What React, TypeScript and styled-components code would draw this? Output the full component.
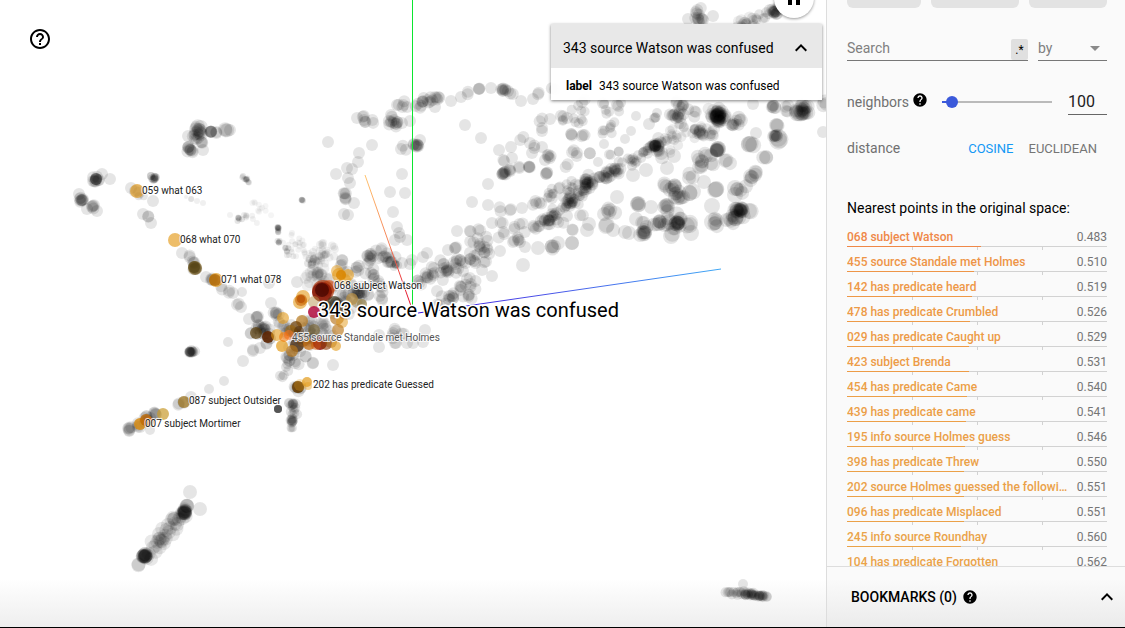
import React from "react";
import styled, { createGlobalStyle } from "styled-components";

const GlobalStyle = createGlobalStyle`
  *, *::before, *::after { box-sizing: border-box; }
  body {
    margin: 0;
    background: #fff;
    color: #000;
    font-family: Roboto, "Liberation Sans", sans-serif;
    font-size: 14px;
  }
  button, input, select { font: inherit; color: inherit; margin: 0; }
`;

/* ---------- point cloud data ---------- */

// [x, y, number of overlapping points, spread, radius, opacity]
type Clump = [number, number, number?, number?, number?, number?];
// [x1, y1, x2, y2, number of points, spread, radius, opacity]
type Streak = [number, number, number, number, number, number, number, number?];
// [x, y, radius, colour, opacity]
type Marked = [number, number, number, string, number];

const clumps: Clump[] = [
  [328, 142], [372, 145], [359, 153], [358, 162], [347, 168], [352, 169], [336, 174], [348, 178], [350, 183],
  [345, 193, 3, 1], [345, 198, 3, 1], [354, 203], [344, 214], [348, 215], [402, 174], [390, 192], [405, 193],
  [393, 212], [397, 227], [399, 233], [400, 237], [395, 240], [407, 240], [357, 118], [364, 120, 5, 3],
  [374, 122, 2, 2], [391, 121, 6, 3], [397, 123, 6, 3], [402, 123], [391, 115], [410, 121], [402, 104, 4, 3],
  [397, 105], [407, 107], [418, 107, 2, 2], [422, 102, 6, 3], [429, 102, 4, 3], [435, 97, 4, 3], [439, 97, 2, 1],
  [435, 107], [451, 101], [461, 97], [468, 94, 2, 2], [479, 89, 3, 1], [491, 88], [503, 90, 7, 2], [508, 91],
  [513, 94, 2, 2], [521, 101], [533, 99], [538, 93, 2, 2], [465, 125], [481, 138], [416, 145, 9, 2], [420, 140],
  [405, 147, 2, 2], [401, 149], [499, 150], [511, 147], [522, 138, 2, 2], [530, 143], [533, 148, 2, 2],
  [542, 147], [532, 153], [550, 156, 3, 2], [545, 160], [504, 173, 9, 2], [510, 169, 3, 2], [517, 167, 2, 2],
  [529, 167, 4, 1], [503, 161, 2, 2], [512, 158], [547, 173, 2, 1], [488, 184], [472, 202], [488, 205],
  [540, 120, 2, 2], [550, 119], [562, 118, 2, 2], [542, 128], [567, 118], [542, 131], [500, 210, 2, 2],
  [510, 209, 2, 2], [522, 208], [535, 203, 3, 3], [541, 204, 2, 2], [550, 196, 2, 2], [560, 188, 2, 3],
  [549, 220, 9, 3], [554, 216, 4, 3], [537, 227, 2, 3], [502, 223, 2, 2], [514, 227, 2, 2], [492, 223],
  [503, 233, 2, 2], [518, 240, 4, 3], [513, 242], [525, 247], [500, 251], [552, 247, 4, 3, 7], [538, 248, 1, 0, 7],
  [558, 243, 1, 0, 7], [572, 243, 1, 0, 7], [523, 265, 1, 0, 7], [492, 276], [457, 231], [470, 231, 2, 3],
  [478, 229, 2, 2], [480, 247, 12, 8], [455, 248, 3, 1], [448, 250], [485, 252, 4, 4], [482, 263, 2, 3],
  [482, 270], [427, 278, 4, 4], [435, 272, 3, 4], [448, 270, 4, 3], [457, 260, 4, 4], [440, 262, 2, 3],
  [463, 271], [468, 282, 4, 3], [461, 287, 4, 4], [453, 298, 4, 3], [437, 291], [468, 297, 2, 3],
  [420, 283, 3, 3], [412, 260], [410, 264], [423, 257], [427, 253], [402, 263], [438, 305, 2, 3],
  [368, 256, 9, 4], [378, 250, 2, 3], [384, 256, 5, 5], [357, 267, 4, 4], [342, 260], [396, 265, 6, 2, 4],
  [387, 258, 2, 3], [373, 275, 5, 5], [357, 292, 22, 8], [318, 275, 28, 10, 6, 0.06], [324, 255, 30, 9, 4, 0.06],
  [312, 264, 8, 4, 4], [278, 228, 8, 1, 3], [278, 232, 3, 1, 3], [279, 242, 5, 2, 3], [285, 248, 5, 3, 3],
  [290, 254, 4, 3, 3, 0.07], [292, 233, 1, 0, 3, 0.05], [300, 243, 3, 3, 3, 0.05], [239, 219, 6, 2, 3],
  [247, 216, 4, 3, 3, 0.07], [252, 220, 3, 4, 3, 0.05], [230, 215, 1, 0, 3, 0.05],
  [395, 330, 3, 3], [379, 335], [379, 347], [403, 332, 2, 2],
  [395, 343, 2, 2], [413, 343], [423, 342], [425, 330], [393, 337, 2, 2], [407, 343], [257, 317, 4, 1],
  [276, 313, 6, 2], [263, 329, 16, 5], [270, 338, 6, 5], [250, 333, 2, 2], [253, 351, 2, 1], [260, 348],
  [243, 361], [313, 363, 2, 1], [333, 365], [290, 357, 7, 3], [286, 367, 3, 3, 5], [283, 375, 3, 4, 5],
  [297, 362, 3, 3], [293, 404, 12, 3, 5, 0.09], [293, 413, 5, 3, 5], [292, 421, 12, 3, 5, 0.08], [291, 427, 3, 2, 4],
  [278, 409, 10, 0, 4], [298, 387, 10, 3], [305, 340, 26, 12], [320, 328, 30, 12, 6, 0.08], [338, 304, 26, 10],
  [326, 290, 12, 5],
  [182, 253], [189, 258, 2, 2], [192, 263, 3, 2], [195, 268, 8, 2], [206, 277], [212, 280, 4, 2], [223, 287, 2, 2],
  [229, 293, 2, 2], [233, 293], [242, 292, 1, 0, 5], [237, 304, 2, 2], [241, 307], [228, 342, 1, 0, 5],
  [190, 352, 9, 1, 5], [193, 352, 7, 2, 5], [249, 319], [271, 303], [224, 381, 1, 0, 5], [209, 389, 1, 0, 5],
  [191, 397], [179, 404, 2, 1], [184, 402, 4, 1], [150, 430, 1, 0, 5], [155, 414, 5, 2], [130, 429, 6, 2],
  [137, 426, 4, 3], [147, 419, 8, 3], [297, 282], [269, 283], [287, 330, 6, 5], [283, 322, 4, 4],
  [96, 179, 10, 3], [96, 179, 4, 0], [102, 174], [110, 179], [82, 200, 9, 2], [79, 194], [93, 206, 5, 2],
  [97, 211], [87, 209], [154, 178, 11, 2, 4], [151, 176, 2, 1, 4], [131, 188], [137, 191, 3, 2],
  [143, 195, 2, 3, 4], [153, 201],
  [143, 214], [148, 217, 2, 1], [151, 223], [199, 130, 10, 3, 7], [196, 127], [211, 132, 6, 1], [217, 133, 2, 1],
  [226, 130, 3, 1, 7], [230, 130], [197, 137, 6, 3], [188, 136], [190, 149, 8, 3], [202, 142, 3, 2],
  [203, 150], [187, 146, 2, 2], [246, 179, 6, 1, 3], [243, 176, 2, 1, 3], [249, 182, 2, 1, 3],
  [191, 199, 2, 1, 3, 0.06], [197, 201, 1, 0, 3, 0.06], [203, 203, 1, 0, 3, 0.06], [186, 197, 1, 0, 2, 0.06],
  [302, 200, 5, 1, 3], [254, 202, 3, 3, 3, 0.04], [259, 206, 4, 5, 3, 0.04], [266, 211, 4, 5, 3, 0.04],
  [190, 492, 1, 0, 7], [200, 509, 1, 0, 7], [184, 512, 15, 2, 7], [187, 506, 3, 1, 7], [145, 557, 15, 2, 7],
  [139, 564, 2, 1, 7], [743, 584, 1, 0, 5],
  [718, 116, 20, 5, 7], [718, 116, 8, 2, 8], [714, 116, 14, 10, 6, 0.08], [655, 146, 16, 4], [655, 146, 5, 6],
  [588, 184, 16, 4], [586, 182, 8, 8, 6], [617, 170, 8, 3], [740, 210, 16, 3, 7], [736, 215, 6, 5, 8],
  [751, 210, 2, 2, 8], [803, 112, 16, 5, 7], [800, 113, 5, 6, 8], [775, 136, 7, 2, 6], [777, 138, 3, 2, 9],
  [717, 150, 7, 1, 7], [718, 149, 2, 0, 8], [706, 156, 6, 6, 7], [726, 161, 3, 3, 7], [712, 164, 2, 3, 7],
  [752, 177, 5, 3, 7], [756, 172, 2, 2, 7], [742, 192, 5, 5, 7], [735, 188, 1, 0, 8], [735, 195, 1, 0, 8],
  [676, 193, 14, 6, 7], [666, 186, 4, 5, 7], [690, 193, 3, 3, 8], [668, 206, 6, 5, 7],
  [678, 223, 14, 5, 7], [678, 224, 5, 8, 8], [660, 222, 10, 6, 7], [644, 232, 8, 2, 7], [643, 228, 3, 4, 7],
  [690, 223, 2, 3, 8], [691, 233, 1, 0, 8], [671, 236, 1, 0, 8], [636, 219, 1, 0, 7], [651, 207, 1, 0, 7],
  [715, 223, 5, 3, 7], [713, 222, 1, 0, 9], [731, 218, 6, 4, 7], [716, 189, 3, 1, 8], [712, 206, 1, 0, 8],
  [610, 212, 5, 4, 7], [606, 226, 2, 1, 8], [604, 214, 1, 0, 7], [638, 204, 3, 1, 7], [638, 204, 1, 0, 8],
  [572, 200, 12, 5, 6], [580, 195, 4, 4, 5], [698, 19, 10, 4], [697, 10, 3, 3], [713, 16], [688, 19],
  [775, 12, 8, 3], [745, 23, 10, 6, 6, 0.07],
  [678, 117, 14, 6, 6], [682, 106, 8, 5, 6], [700, 133, 9, 4, 6], [710, 136, 3, 2, 6], [733, 125, 8, 6, 6],
  [739, 118, 2, 3, 7], [694, 113, 3, 4, 6], [777, 125, 3, 2, 7], [773, 107, 5, 2], [774, 107, 1, 0, 7],
  [787, 110, 4, 4], [753, 145, 3, 3, 8], [749, 144, 1, 0, 8], [756, 133, 1, 0, 6], [763, 157, 3, 3, 7],
  [823, 132], [824, 104, 3, 2, 7], [610, 130, 4, 4, 5], [612, 125, 2, 3, 5], [603, 131, 2, 2, 5],
  [577, 118, 5, 5, 5], [562, 118, 2, 2, 5], [571, 135, 3, 2], [584, 135, 3, 2], [549, 156, 2, 2, 6],
  [572, 152, 2, 2, 6], [577, 153, 2, 2, 6], [590, 153, 2, 1, 6], [546, 174, 2, 1], [567, 167, 2, 2],
  [636, 116, 1, 0, 5], [631, 131, 1, 0, 5], [606, 112, 2, 2, 5], [617, 104, 2, 3, 6], [603, 103, 1, 0, 6],
  [584, 104, 2, 3, 6], [649, 124, 1, 0, 6], [656, 120, 3, 2, 5], [657, 113, 1, 0, 5], [625, 139, 1, 0, 5],
  [604, 144, 1, 0, 5], [619, 152, 2, 2, 5], [611, 155, 2, 2, 5], [598, 162, 1, 0, 5], [632, 161, 5, 4, 5],
  [667, 168, 1, 0, 7], [646, 170, 1, 0, 7], [633, 175, 1, 0, 7], [691, 177, 3, 3, 7], [702, 166, 4, 4, 7],
  [704, 182, 1, 0, 7], [662, 156, 2, 3, 7], [674, 156, 1, 0, 7], [617, 197, 1, 0, 7], [625, 232, 1, 0, 7],
  [587, 230, 1, 0, 7], [589, 224, 1, 0, 7], [573, 229, 2, 1], [579, 216, 2, 3], [572, 243, 1, 0, 7],
  [560, 225, 2, 3], [567, 216, 1, 0], [554, 87, 2, 3], [753, 104, 1, 0, 6],
  [382, 300, 4, 6], [381, 285, 4, 6],
];

const streaks: Streak[] = [
  [592, 182, 618, 168, 18, 3, 6],
  [618, 168, 650, 148, 18, 4, 5],
  [655, 145, 705, 128, 36, 9, 5, 0.08],
  [552, 217, 588, 190, 22, 5, 5],
  [545, 200, 575, 185, 12, 6, 5],
  [500, 240, 548, 222, 12, 6, 6],
  [420, 284, 480, 255, 26, 6, 6],
  [445, 300, 478, 285, 12, 6, 6],
  [565, 112, 620, 108, 8, 6, 5],
  [740, 24, 775, 12, 14, 3, 5],
  [770, 13, 800, 2, 12, 3, 6],
  [146, 555, 184, 514, 36, 5, 7, 0.09],
  [727, 592, 768, 597, 20, 2, 5],
  [733, 592, 752, 595, 16, 2, 5],
  [752, 595, 764, 597, 10, 1, 5],
  [340, 268, 400, 262, 16, 7, 6],
  [290, 240, 320, 262, 22, 7, 3, 0.05],
  [610, 235, 640, 230, 3, 4, 7],
];

const gold = "#e39a18";
const marked: Marked[] = [
  [137, 191, 7, gold, 0.65], [175, 240, 7, gold, 0.65], [195, 268, 7, "#7a5a10", 0.6], [194, 267, 6, "#4a3808", 0.5],
  [216, 280, 7, gold, 0.7], [215, 280, 6, "#a85f00", 0.7], [184, 402, 6, "#b58419", 0.6], [163, 414, 6, "#c89a2c", 0.7],
  [140, 424, 6, "#d98a0a", 0.8], [146, 420, 6, "#c06a05", 0.8], [149, 422, 5, "#e06c10", 0.6],
  [339, 275, 7, gold, 0.6], [348, 275, 6, gold, 0.6], [345, 280, 6, gold, 0.5], [337, 271, 6, gold, 0.5],
  [341, 275, 5, "#d88400", 0.8],
  [329, 287, 7, "#e8500c", 0.6], [323, 291, 11, "#b03a10", 0.7], [322, 292, 10, "#801000", 0.75], [322, 290, 7, "#400400", 0.7],
  [303, 297, 7, gold, 0.6], [300, 302, 7, gold, 0.6], [301, 300, 6, "#c86005", 0.6], [301, 299, 4, "#b04400", 0.6],
  [314, 302, 6, "#b89550", 0.5], [283, 318, 6, gold, 0.6], [302, 321, 6, "#b87a20", 0.7],
  [334, 303, 7, "#2c2208", 0.6], [326, 306, 6, "#2c2208", 0.4], [344, 312, 7, "#6a4810", 0.5], [337, 318, 7, "#b06808", 0.6],
  [342, 322, 6, gold, 0.5], [314, 330, 6, "#7c6630", 0.6],
  [296, 327, 6, "#6a3a00", 0.7], [291, 331, 6, "#a06a10", 0.6], [299, 331, 5, "#482400", 0.5],
  [256, 333, 6, "#5a3d0a", 0.7], [268, 337, 6, "#5c2300", 0.9], [277, 335, 6, gold, 0.6], [282, 346, 6, gold, 0.7],
  [284, 337, 5, "#f07808", 0.6], [289, 335, 5, "#ff6a10", 0.5], [297, 345, 7, "#3c1c00", 0.7], [292, 351, 6, "#b8781c", 0.7],
  [303, 341, 6, "#80480a", 0.5], [309, 344, 6, "#c46806", 0.7], [320, 343, 7, "#8c1208", 0.85], [326, 344, 6, "#8c3a05", 0.6],
  [316, 345, 5, "#d05808", 0.5], [331, 342, 6, "#9c5c10", 0.5], [338, 330, 6, "#c0822c", 0.7], [336, 346, 5, gold, 0.6],
  [352, 299, 6, "#bd9344", 0.7], [362, 304, 5, "#94814a", 0.7], [357, 303, 5, "#a58a48", 0.4],
  [314, 312, 6, "#b00b3c", 0.85], [298, 387, 6, "#6e4206", 0.85], [300, 385, 6, gold, 0.3],
  [307, 382, 5, gold, 0.7], [308, 386, 4, gold, 0.4],
];

// Linear congruential generator, so that the cloud is the same on every render.
function makeRandom(seed: number) {
  let state = seed;
  return () => {
    state = (state * 1664525 + 1013904223) % 4294967296;
    return state / 4294967296;
  };
}

function buildCloud() {
  const random = makeRandom(7);
  const dots: { x: number; y: number; r: number; opacity: number }[] = [];
  const scatter = (x: number, y: number, spread: number, r: number, opacity: number) => {
    const angle = random() * Math.PI * 2;
    const distance = random() * spread;
    dots.push({ x: x + Math.cos(angle) * distance, y: y + Math.sin(angle) * distance, r, opacity });
  };
  clumps.forEach(([x, y, count = 1, spread = 0, r = 6, opacity = 0.1]) => {
    for (let i = 0; i < count; i++) scatter(x, y, spread * 1.5, r, opacity);
  });
  streaks.forEach(([x1, y1, x2, y2, count, spread, r, opacity = 0.1]) => {
    for (let i = 0; i < count; i++) {
      const t = random();
      scatter(x1 + (x2 - x1) * t, y1 + (y2 - y1) * t, spread * 1.4, r, opacity);
    }
  });
  return dots;
}

const cloud = buildCloud();

const labels: [number, number, string][] = [
  [142, 194, "059 what 063"],
  [180, 243, "068 what 070"],
  [221, 283, "071 what 078"],
  [334, 289, "068 subject Watson"],
  [292, 341, "455 source Standale met Holmes"],
  [313, 388, "202 has predicate Guessed"],
  [189, 404, "087 subject Outsider"],
  [145, 427, "007 subject Mortimer"],
];

const neighbors: [string, number, string][] = [
  ["068 subject Watson", 0.483, "#ef8848"],
  ["455 source Standale met Holmes", 0.51, "#ee9547"],
  ["142 has predicate heard", 0.519, "#ee9847"],
  ["478 has predicate Crumbled", 0.526, "#ed9a47"],
  ["029 has predicate Caught up", 0.529, "#ed9b47"],
  ["423 subject Brenda", 0.531, "#ed9c47"],
  ["454 has predicate Came", 0.54, "#ec9f47"],
  ["439 has predicate came", 0.541, "#ec9f47"],
  ["195 info source Holmes guess", 0.546, "#eba048"],
  ["398 has predicate Threw", 0.55, "#eba148"],
  ["202 source Holmes guessed the following", 0.551, "#eba148"],
  ["096 has predicate Misplaced", 0.551, "#eba148"],
  ["245 info source Roundhay", 0.56, "#eaa349"],
  ["104 has predicate Forgotten", 0.562, "#eaa349"],
];

/* ---------- layout ---------- */

const Shell = styled.div`
  display: flex;
  height: 100vh;
  border-bottom: 1px solid #000;
  overflow: hidden;
`;

const Stage = styled.main`
  position: relative;
  flex: 1;
  min-width: 0;
  overflow: hidden;
  background: linear-gradient(to top, #eeeeee, #ffffff 48px);
`;

const Plot = styled.svg`
  display: block;
  width: 100%;
  height: 100%;
`;

const PointLabel = styled.text`
  font-size: 10px;
  fill: #222;
  stroke: #fff;
  stroke-opacity: 0.8;
  stroke-width: 2px;
  stroke-linejoin: round;
  paint-order: stroke;
`;

const FadedLabel = styled(PointLabel)`
  fill: #555;
`;

const FocusLabel = styled(PointLabel)`
  font-size: 20px;
  fill: #000;
  stroke-opacity: 1;
  stroke-width: 3px;
`;

const IconButton = styled.button`
  display: inline-flex;
  padding: 0;
  border: 0;
  background: none;
  cursor: pointer;
`;

const HelpButton = styled(IconButton)`
  position: absolute;
  top: 27px;
  left: 28px;
`;

const PauseButton = styled(IconButton)`
  position: absolute;
  top: -22px;
  right: 12px;
  width: 40px;
  height: 40px;
  align-items: center;
  justify-content: center;
  border-radius: 50%;
  background: #fff;
  box-shadow: 0 1px 3px rgba(0, 0, 0, 0.4);
`;

const MetadataCard = styled.section`
  position: absolute;
  top: 24px;
  right: 4px;
  width: 271px;
  background: rgba(255, 255, 255, 0.96);
  box-shadow: 0 1px 3px rgba(0, 0, 0, 0.5);
`;

const CardHeader = styled.header`
  display: flex;
  align-items: center;
  justify-content: space-between;
  height: 44px;
  padding: 4px 9px 0 12px;
  background: #e8e8e8;
`;

const CardTitle = styled.h2`
  margin: 0;
  font-size: 14px;
  font-weight: 400;
`;

const CardBody = styled.dl`
  display: flex;
  align-items: center;
  gap: 7px;
  height: 32px;
  margin: 0;
  padding: 4px 15px 0;
  font-size: 12px;

  dt { font-weight: 700; }
  dd { margin: 0; }
`;

const Sidebar = styled.aside`
  display: flex;
  flex-direction: column;
  flex: 0 0 299px;
  min-width: 0;
  border-left: 1px solid #ddd;
  background: #fafafa;
`;

const Inspector = styled.div`
  flex: 1;
  min-height: 0;
  padding: 0 18px 0 20px;
  overflow: hidden;
`;

const Actions = styled.div`
  display: flex;
  gap: 10px;
`;

const ActionButton = styled.button<{ $grow: number }>`
  flex: ${(p) => p.$grow} 1 0;
  height: 8px;
  padding: 0;
  border: 0;
  border-radius: 0 0 6px 6px;
  background: #e3e3e3;
`;

const SearchRow = styled.div`
  display: flex;
  gap: 10px;
  height: 22px;
  margin-top: 31px;
`;

const SearchField = styled.div`
  display: flex;
  flex: 1;
  min-width: 0;
  border-bottom: 1px solid #777;
`;

const SearchInput = styled.input`
  flex: 1;
  min-width: 0;
  padding: 0 0 3px;
  border: 0;
  outline: 0;
  background: none;

  &::placeholder { color: #808080; opacity: 1; }
`;

const RegexButton = styled.button`
  width: 17px;
  height: 21px;
  padding: 0;
  border: 0;
  border-radius: 2px;
  background: #e0e0e0;
  color: #000;
  font-size: 12px;
`;

const SelectWrap = styled.div`
  position: relative;
  width: 69px;
  border-bottom: 1px solid #777;

  &::after {
    content: "";
    position: absolute;
    top: 7px;
    right: 7px;
    border: 5px solid transparent;
    border-top-color: #8a8a8a;
    border-bottom: 0;
    pointer-events: none;
  }
`;

const BySelect = styled.select`
  width: 100%;
  height: 18px;
  padding: 0;
  border: 0;
  outline: 0;
  appearance: none;
  background: none;
  color: #808080;
`;

const NeighborsRow = styled.div`
  display: flex;
  align-items: center;
  height: 26px;
  margin-top: 28px;
  color: #707070;
`;

const HelpMark = styled(IconButton)`
  margin: 0 0 4px 3px;
  color: #000;
`;

const Slider = styled.input`
  flex: 1;
  min-width: 0;
  height: 12px;
  margin: 0 10px 0 8px;
  appearance: none;
  background:
    linear-gradient(#3b59da, #3b59da) 6px center / 10px 2px no-repeat,
    linear-gradient(#bababa, #bababa) center / calc(100% - 12px) 2px no-repeat;

  &::-webkit-slider-thumb {
    appearance: none;
    width: 12px;
    height: 12px;
    border-radius: 50%;
    background: #3b59da;
  }
`;

const CountInput = styled.input`
  width: 39px;
  height: 26px;
  padding: 0;
  border: 0;
  border-bottom: 1px solid #666;
  outline: 0;
  background: none;
  color: #212121;
  font-size: 16px;
`;

const DistanceRow = styled.div`
  display: flex;
  align-items: center;
  height: 18px;
  margin-top: 24px;
  color: #707070;
`;

const DistanceOptions = styled.div`
  display: flex;
  gap: 15px;
  margin: 0 10px 0 auto;
`;

const DistanceButton = styled.button<{ $active?: boolean }>`
  padding: 0;
  border: 0;
  background: none;
  color: ${(p) => (p.$active ? "#1398f5" : "#757575")};
  font-size: 13px;
  cursor: pointer;
`;

const ListTitle = styled.h3`
  margin: 42px 0 8px;
  font-size: 14px;
  font-weight: 400;
  line-height: 18px;
`;

const NeighborList = styled.ul`
  margin: 0;
  padding: 0;
  list-style: none;
`;

const NeighborItem = styled.li`
  height: 25px;
`;

const NeighborLink = styled.a`
  display: flex;
  justify-content: space-between;
  height: 21px;
  padding-top: 3px;
  font-size: 12px;
  line-height: 18px;
  text-decoration: none;
`;

const NeighborName = styled.span<{ $color: string }>`
  width: 222px;
  overflow: hidden;
  color: ${(p) => p.$color};
  font-weight: 500;
  text-overflow: ellipsis;
  white-space: nowrap;
`;

const NeighborValue = styled.span`
  color: #757575;
`;

const Bar = styled.div`
  display: grid;
  grid-template-columns: repeat(4, 1fr);
  grid-template-rows: 4px;
  background: linear-gradient(#d2d2d2, #d2d2d2) top / 100% 1px no-repeat;
`;

const Tick = styled.span<{ $column: number }>`
  grid-row: 1;
  grid-column: ${(p) => p.$column};
  margin-top: 1px;
  border-left: 1px solid #d2d2d2;
`;

const Fill = styled.span<{ $color: string }>`
  grid-row: 1;
  grid-column: 1 / -1;
  height: 1px;
  background: ${(p) => p.$color};
`;

const Bookmarks = styled.footer`
  display: flex;
  align-items: center;
  flex: 0 0 61px;
  padding: 0 6px 0 24px;
  border-top: 1px solid #ddd;
  background: linear-gradient(to top, #ebebeb, #fafafa 48px);
`;

const BookmarksTitle = styled.h2`
  margin: 0 5px 0 0;
  font-size: 14px;
  font-weight: 500;
`;

const ToggleButton = styled(IconButton)`
  margin-left: auto;
`;

/* ---------- icons ---------- */

const HelpOutlineIcon = () => (
  <svg width="24" height="24" viewBox="0 0 24 24" fill="#000">
    <path d="M11 18h2v-2h-2v2zm1-16C6.48 2 2 6.48 2 12s4.48 10 10 10 10-4.48 10-10S17.52 2 12 2zm0 18c-4.41 0-8-3.59-8-8s3.59-8 8-8 8 3.59 8 8-3.59 8-8 8zm0-14c-2.21 0-4 1.79-4 4h2c0-1.1.9-2 2-2s2 .9 2 2c0 2-3 1.75-3 5h2c0-2.25 3-2.5 3-5 0-2.21-1.79-4-4-4z" />
  </svg>
);

const HelpIcon = () => (
  <svg width="16" height="16" viewBox="0 0 24 24" fill="#000">
    <path d="M12 2C6.48 2 2 6.48 2 12s4.48 10 10 10 10-4.48 10-10S17.52 2 12 2zm1 17h-2v-2h2v2zm2.07-7.75l-.9.92C13.45 12.9 13 13.5 13 15h-2v-.5c0-1.1.45-2.1 1.17-2.83l1.24-1.26c.37-.36.59-.86.59-1.41 0-1.1-.9-2-2-2s-2 .9-2 2H8c0-2.21 1.79-4 4-4s4 1.79 4 4c0 .88-.36 1.68-.93 2.25z" />
  </svg>
);

const ExpandLessIcon = () => (
  <svg width="24" height="24" viewBox="0 0 24 24" fill="#000">
    <path d="M12 8l-6 6 1.41 1.41L12 10.83l4.59 4.58L18 14z" />
  </svg>
);

const PauseIcon = () => (
  <svg width="24" height="24" viewBox="0 0 24 24" fill="#000">
    <path d="M6 19h4V5H6v14zm8-14v14h4V5h-4z" />
  </svg>
);

/* ---------- page ---------- */

export default function App() {
  return (
    <>
      <GlobalStyle />
      <Shell>
        <Stage>
          <Plot role="img" aria-label="Embedding projection">
            <defs>
              <linearGradient id="axis-x" gradientUnits="userSpaceOnUse" x1="365" y1="175" x2="411" y2="306">
                <stop offset="0" stopColor="#ffc46e" />
                <stop offset="0.5" stopColor="#f58257" />
                <stop offset="1" stopColor="#e3092b" />
              </linearGradient>
              <linearGradient id="axis-z" gradientUnits="userSpaceOnUse" x1="418" y1="313" x2="721" y2="269">
                <stop offset="0" stopColor="#3a12e0" />
                <stop offset="0.4" stopColor="#4a50e8" />
                <stop offset="1" stopColor="#3fa8f5" />
              </linearGradient>
            </defs>
            {cloud.map((dot, i) => (
              <circle key={i} cx={dot.x} cy={dot.y} r={dot.r} fillOpacity={dot.opacity} />
            ))}
            {marked.map(([x, y, r, color, opacity], i) => (
              <circle key={i} cx={x} cy={y} r={r} fill={color} fillOpacity={opacity} />
            ))}
            <line x1="365" y1="175" x2="411" y2="306" stroke="url(#axis-x)" />
            <line x1="412.5" y1="0" x2="412.5" y2="308" stroke="#0be62f" />
            <line x1="418" y1="313" x2="721" y2="269" stroke="url(#axis-z)" />
            {labels.map(([x, y, text]) => {
              const Label = text.startsWith("455") ? FadedLabel : PointLabel;
              return <Label key={text} x={x} y={y}>{text}</Label>;
            })}
            <FocusLabel x="318" y="317">343 source Watson was confused</FocusLabel>
          </Plot>
          <HelpButton aria-label="Help"><HelpOutlineIcon /></HelpButton>
          <PauseButton aria-label="Pause"><PauseIcon /></PauseButton>
          <MetadataCard>
            <CardHeader>
              <CardTitle>343 source Watson was confused</CardTitle>
              <IconButton aria-label="Collapse"><ExpandLessIcon /></IconButton>
            </CardHeader>
            <CardBody>
              <dt>label</dt>
              <dd>343 source Watson was confused</dd>
            </CardBody>
          </MetadataCard>
        </Stage>

        <Sidebar>
          <Inspector>
            <Actions>
              <ActionButton $grow={74} aria-label="Show all data" />
              <ActionButton $grow={88} aria-label="Isolate points" />
              <ActionButton $grow={78} aria-label="Clear selection" />
            </Actions>
            <SearchRow>
              <SearchField>
                <SearchInput type="text" placeholder="Search" aria-label="Search" />
                <RegexButton aria-label="Use regular expression">.*</RegexButton>
              </SearchField>
              <SelectWrap>
                <BySelect aria-label="Search by" defaultValue="by">
                  <option value="by">by</option>
                </BySelect>
              </SelectWrap>
            </SearchRow>
            <NeighborsRow>
              <label htmlFor="neighbors">neighbors</label>
              <HelpMark aria-label="About neighbors"><HelpIcon /></HelpMark>
              <Slider id="neighbors" type="range" min={5} max={999} defaultValue={100} />
              <CountInput type="text" defaultValue="100" aria-label="Number of neighbors" />
            </NeighborsRow>
            <DistanceRow>
              <span>distance</span>
              <DistanceOptions>
                <DistanceButton $active>COSINE</DistanceButton>
                <DistanceButton>EUCLIDEAN</DistanceButton>
              </DistanceOptions>
            </DistanceRow>
            <ListTitle>Nearest points in the original space:</ListTitle>
            <NeighborList>
              {neighbors.map(([name, distance, color]) => (
                <NeighborItem key={name}>
                  <NeighborLink href="#">
                    <NeighborName $color={color}>{name}</NeighborName>
                    <NeighborValue>{distance.toFixed(3)}</NeighborValue>
                  </NeighborLink>
                  <Bar>
                    <Tick $column={2} />
                    <Tick $column={3} />
                    <Tick $column={4} />
                    <Fill $color={color} style={{ width: `${(1 - distance) * 100}%` }} />
                  </Bar>
                </NeighborItem>
              ))}
            </NeighborList>
          </Inspector>
          <Bookmarks>
            <BookmarksTitle>BOOKMARKS (0)</BookmarksTitle>
            <IconButton aria-label="About bookmarks"><HelpIcon /></IconButton>
            <ToggleButton aria-label="Expand bookmarks"><ExpandLessIcon /></ToggleButton>
          </Bookmarks>
        </Sidebar>
      </Shell>
    </>
  );
}
